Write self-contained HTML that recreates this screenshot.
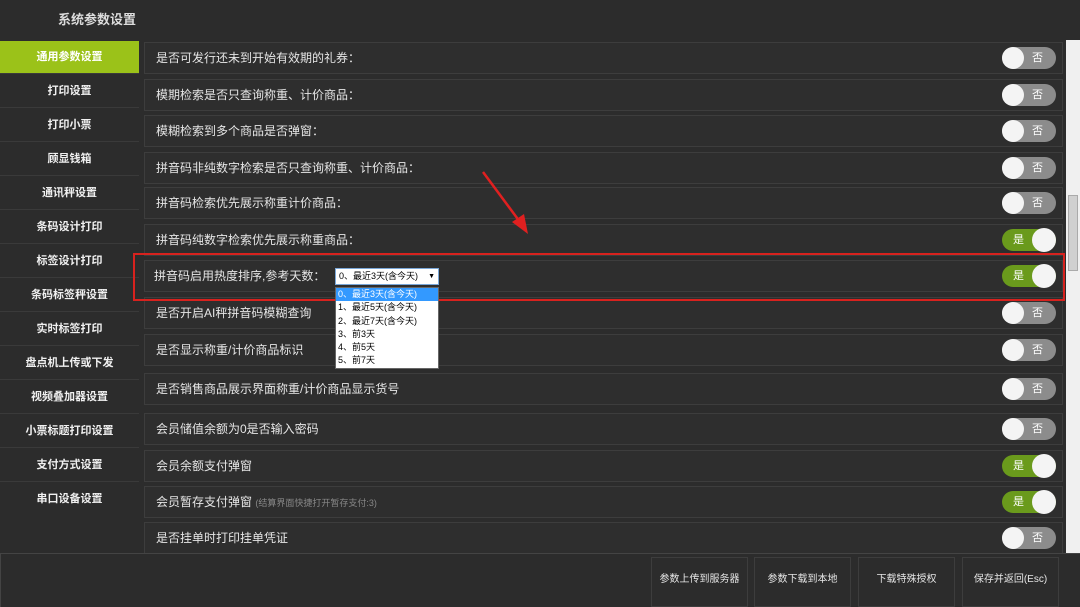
<!DOCTYPE html>
<html><head><meta charset="utf-8"><style>
*{margin:0;padding:0;box-sizing:border-box}
body{width:1080px;height:607px;background:#2c2c2c;position:relative;overflow:hidden;font-family:"Liberation Sans","Noto Sans CJK SC",sans-serif;color:#e6e6e6}
.t{position:absolute;left:58px;top:9px;font-size:13px;font-weight:bold;color:#ddd}
.side{position:absolute;left:0;width:139px;height:33px;font-size:11px;font-weight:bold;text-align:center;line-height:33px;color:#f0f0f0;border-bottom:1px solid #3a3a3a}
.side.a{background:#9bc219;color:#fff}
.row{position:absolute;left:144px;width:919px;height:32px;border:1px solid #3d3d3d;background:#2e2e2e;font-size:12px;line-height:30px;padding-left:11px;color:#e6e6e6}
.tg{position:absolute;left:1002px;width:54px;height:22px;border-radius:11px;background:#8c8c8c;font-size:11px;color:#fff;line-height:22px}
.tg::before{content:"";position:absolute;top:0;width:22px;height:22px;border-radius:11px;background:#f4f4f4}
.tg.off::before{left:0}.tg.off span{position:absolute;left:30px}
.tg.on{background:#6a9a1c}.tg.on::before{right:0;width:24px;height:24px;top:-1px;border-radius:12px}.tg.on span{position:absolute;left:11px}
.btn{position:absolute;top:557px;width:97px;height:50px;border:1px solid #3d3d3d;font-size:10px;text-align:center;line-height:44px;color:#e6e6e6}
</style></head><body>
<div class="t">系统参数设置</div>
<div class="side a" style="top:41px">通用参数设置</div>
<div class="side" style="top:75px">打印设置</div>
<div class="side" style="top:109px">打印小票</div>
<div class="side" style="top:143px">顾显钱箱</div>
<div class="side" style="top:177px">通讯秤设置</div>
<div class="side" style="top:211px">条码设计打印</div>
<div class="side" style="top:245px">标签设计打印</div>
<div class="side" style="top:279px">条码标签秤设置</div>
<div class="side" style="top:313px">实时标签打印</div>
<div class="side" style="top:347px">盘点机上传或下发</div>
<div class="side" style="top:381px">视频叠加器设置</div>
<div class="side" style="top:415px">小票标题打印设置</div>
<div class="side" style="top:449px">支付方式设置</div>
<div class="side" style="top:483px;border:none">串口设备设置</div>

<div class="row" style="top:42px">是否可发行还未到开始有效期的礼券：</div>
<div class="row" style="top:79px">模期检索是否只查询称重、计价商品：</div>
<div class="row" style="top:115px">模糊检索到多个商品是否弹窗：</div>
<div class="row" style="top:152px">拼音码非纯数字检索是否只查询称重、计价商品：</div>
<div class="row" style="top:187px">拼音码检索优先展示称重计价商品：</div>
<div class="row" style="top:224px">拼音码纯数字检索优先展示称重商品：</div>
<div class="row" style="top:260px;padding-left:9px">拼音码启用热度排序,参考天数：</div>
<div class="row" style="top:297px">是否开启AI秤拼音码模糊查询</div>
<div class="row" style="top:334px">是否显示称重/计价商品标识</div>
<div class="row" style="top:373px">是否销售商品展示界面称重/计价商品显示货号</div>
<div class="row" style="top:413px">会员储值余额为0是否输入密码</div>
<div class="row" style="top:450px">会员余额支付弹窗</div>
<div class="row" style="top:486px">会员暂存支付弹窗 <span style="font-size:9px;color:#888">(结算界面快捷打开暂存支付:3)</span></div>
<div class="row" style="top:522px">是否挂单时打印挂单凭证</div>

<div class="tg off" style="top:47px"><span>否</span></div>
<div class="tg off" style="top:84px"><span>否</span></div>
<div class="tg off" style="top:120px"><span>否</span></div>
<div class="tg off" style="top:157px"><span>否</span></div>
<div class="tg off" style="top:192px"><span>否</span></div>
<div class="tg on" style="top:229px"><span>是</span></div>
<div class="tg on" style="top:265px"><span>是</span></div>
<div class="tg off" style="top:302px"><span>否</span></div>
<div class="tg off" style="top:339px"><span>否</span></div>
<div class="tg off" style="top:378px"><span>否</span></div>
<div class="tg off" style="top:418px"><span>否</span></div>
<div class="tg on" style="top:455px"><span>是</span></div>
<div class="tg on" style="top:491px"><span>是</span></div>
<div class="tg off" style="top:527px"><span>否</span></div>

<div style="position:absolute;left:133px;top:253px;width:932px;height:48px;border:2px solid #d8221e"></div>
<svg style="position:absolute;left:0;top:0" width="1080" height="607"><line x1="483" y1="172" x2="520" y2="222" stroke="#e02020" stroke-width="2.5"/><polygon points="528,234 512,222 524,214" fill="#e02020"/></svg>

<div style="position:absolute;left:335px;top:268px;width:104px;height:17px;background:#fff;border:1px solid #7aa7d8;font-size:9px;color:#000;line-height:15px;padding-left:3px">0、最近3天(含今天) <span style="position:absolute;right:3px;font-size:7px">▼</span></div>
<div style="position:absolute;left:335px;top:287px;width:104px;height:82px;background:#fff;border:1px solid #666;font-size:9px;color:#000;line-height:13.3px">
<div style="background:#3399ff;color:#fff;padding-left:2px">0、最近3天(含今天)</div>
<div style="padding-left:2px">1、最近5天(含今天)</div><div style="padding-left:2px">2、最近7天(含今天)</div><div style="padding-left:2px">3、前3天</div><div style="padding-left:2px">4、前5天</div><div style="padding-left:2px">5、前7天</div></div>

<div style="position:absolute;left:1066px;top:40px;width:14px;height:513px;background:#f0f0f0"></div>
<div style="position:absolute;left:1068px;top:195px;width:10px;height:76px;background:#d0d0d0;border:1px solid #aaa"></div>

<div style="position:absolute;left:0;top:553px;width:1080px;height:54px;border-top:1px solid #444;border-left:1px solid #444;background:#2c2c2c"></div>
<div class="btn" style="left:651px">参数上传到服务器</div>
<div class="btn" style="left:754px">参数下载到本地</div>
<div class="btn" style="left:858px">下载特殊授权</div>
<div class="btn" style="left:962px">保存并返回(Esc)</div>
</body></html>
